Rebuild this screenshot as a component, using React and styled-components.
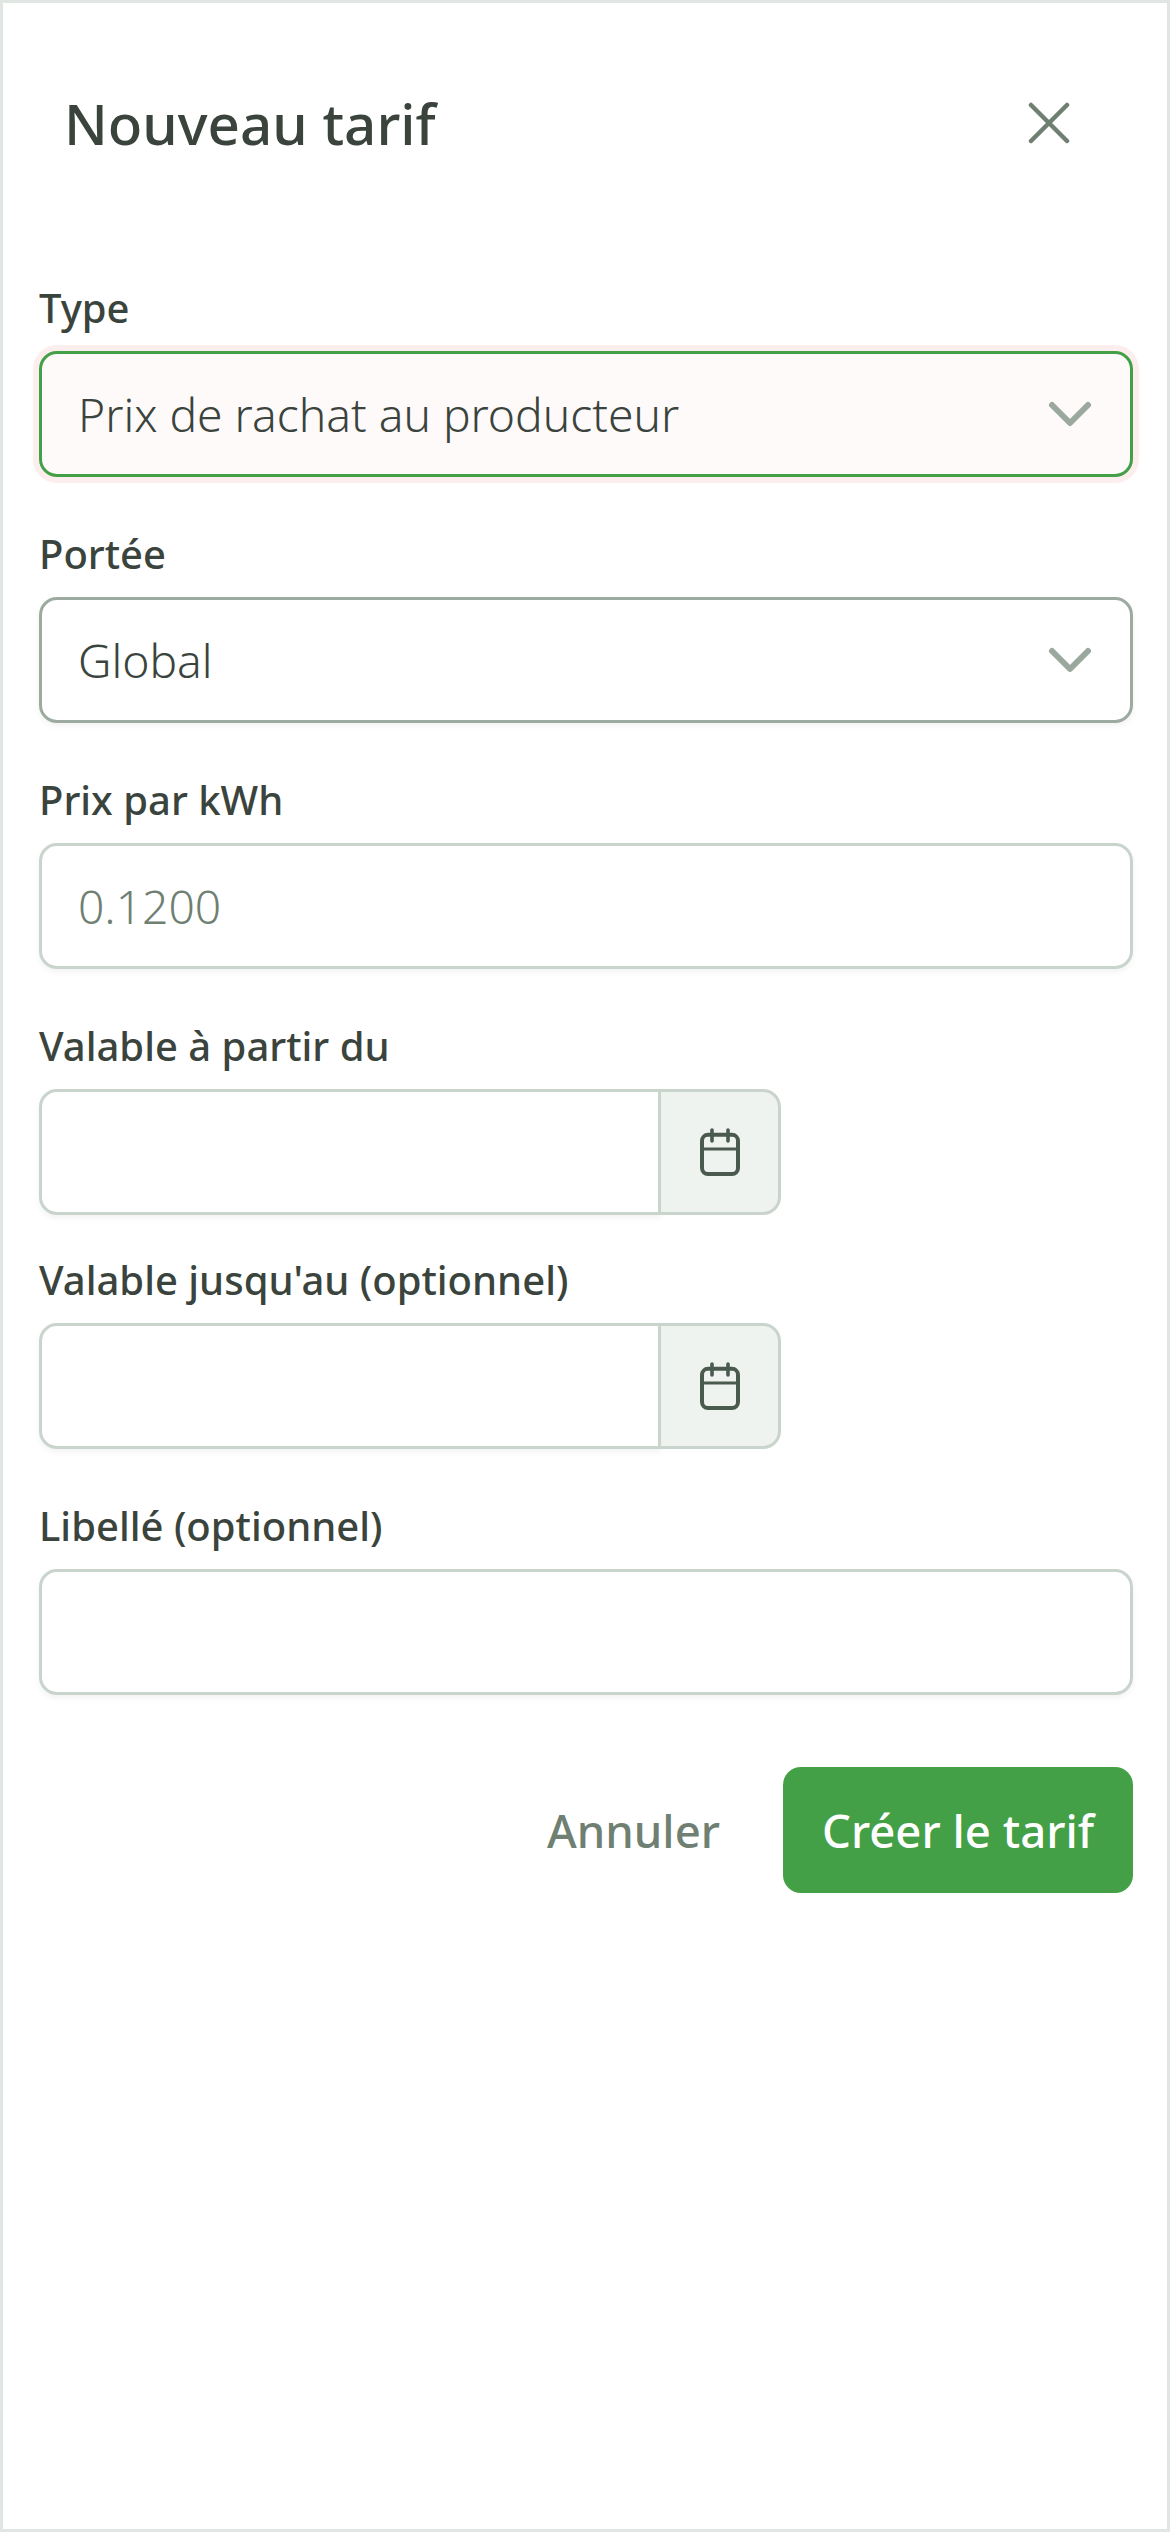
import React from 'react'
import styled, { createGlobalStyle } from 'styled-components'

const GlobalStyle = createGlobalStyle`
  html, body {
    margin: 0;
    padding: 0;
    background: #fff;
  }
  * { box-sizing: border-box; }
`

const Panel = styled.div`
  width: 1170px;
  height: 2532px;
  border: 3px solid #e0e7e3;
  background: #fff;
  padding: 0 34px 0 36px;
  font-family: "Noto Sans", "Open Sans", sans-serif;
  color: #3a443d;
`

const Header = styled.div`
  display: flex;
  align-items: center;
  justify-content: space-between;
  height: 246px;
  margin-bottom: 27px;
  padding: 0 63px 3px 25px;
`

const Title = styled.h1`
  margin: 0;
  font-size: 56.5px;
  font-weight: 500;
  line-height: 1;
`

const CloseButton = styled.button`
  display: flex;
  margin-bottom: 3px;
  padding: 0;
  border: 0;
  background: none;
  color: #6f7f72;
`

const Field = styled.div`
  margin-bottom: ${props => props.$gap}px;
`

const Label = styled.label`
  display: block;
  height: 75px;
  padding-top: 5px;
  font-size: 40px;
  line-height: 54px;
  font-weight: 500;
  color: #3a443d;
`

const SelectWrap = styled.div`
  position: relative;
  height: 126px;
`

const Select = styled.select`
  appearance: none;
  display: block;
  width: 100%;
  height: 100%;
  padding: 0 100px 0 36px;
  border: 3px solid ${props => (props.$active ? '#43a047' : '#9caa9f')};
  border-radius: 18px;
  background: ${props => (props.$active ? '#fffafa' : '#fff')};
  box-shadow: ${props => (props.$active ? '0 0 0 6px #fdeeee' : '0 3px 6px rgba(0,0,0,.05)')};
  font-family: inherit;
  font-size: 46.2px;
  font-weight: 300;
  color: #3a443d;
`

const Chevron = styled.svg`
  position: absolute;
  top: 39px;
  right: 39px;
  color: #9aa89e;
`

const TextInput = styled.input`
  display: block;
  width: 100%;
  height: 126px;
  padding: 0 36px;
  border: 3px solid #c9d4cd;
  border-radius: 18px;
  background: #fff;
  box-shadow: 0 3px 6px rgba(0,0,0,.05);
  font-family: inherit;
  font-size: 46.2px;
  font-weight: 300;
  color: #3a443d;
  &::placeholder {
    color: #6f7f72;
    opacity: 1;
  }
`

const DateGroup = styled.div`
  display: flex;
  width: 742px;
  height: 126px;
`

const DateInput = styled.input`
  flex: 1;
  min-width: 0;
  height: 100%;
  border: 3px solid #c9d4cd;
  border-radius: 18px 0 0 18px;
  background: #fff;
  box-shadow: 0 3px 6px rgba(0,0,0,.05);
`

const DateAddon = styled.span`
  display: flex;
  align-items: center;
  justify-content: center;
  width: 123px;
  margin-left: -3px;
  border: 3px solid #c9d4cd;
  border-radius: 0 18px 18px 0;
  background: #eff3f0;
  color: #4a5a4e;
`

const Actions = styled.div`
  display: flex;
  justify-content: flex-end;
  align-items: center;
  gap: 24px;
  margin-top: 72px;
`

const CancelButton = styled.button`
  height: 126px;
  padding: 0 39px;
  border: 0;
  background: none;
  font-family: inherit;
  font-size: 45.5px;
  font-weight: 500;
  color: #6f7f72;
`

const SubmitButton = styled.button`
  height: 126px;
  padding: 0 39px;
  border: 0;
  border-radius: 18px;
  background: #43a047;
  font-family: inherit;
  font-size: 45.5px;
  font-weight: 500;
  color: #fff;
`

const ChevronIcon = () => (
  <Chevron width="48" height="48" viewBox="0 0 16 16" fill="none" stroke="currentColor" strokeWidth="2" strokeLinecap="round" strokeLinejoin="round">
    <path d="m2 5 6 6 6-6" />
  </Chevron>
)

const CalendarIcon = () => (
  <svg width="48" height="48" viewBox="0 0 24 24" fill="none" stroke="currentColor" strokeWidth="2" strokeLinecap="round" strokeLinejoin="round">
    <rect x="3" y="3.4" width="18" height="19.6" rx="3" />
    <path d="M8 1v5.5M16 1v5.5" strokeWidth="1.8" />
    <path d="M3 10.5h18" strokeWidth="1.5" />
  </svg>
)

export default function App() {
  return (
    <Panel>
      <GlobalStyle />
      <Header>
        <Title>Nouveau tarif</Title>
        <CloseButton>
          <svg width="42" height="42" viewBox="0 0 42 42" fill="none" stroke="currentColor" strokeWidth="4.5" strokeLinecap="round">
            <path d="M3 3l36 36M39 3L3 39" />
          </svg>
        </CloseButton>
      </Header>

      <Field $gap={45}>
        <Label>Type</Label>
        <SelectWrap>
          <Select $active defaultValue="rachat">
            <option value="rachat">Prix de rachat au producteur</option>
          </Select>
          <ChevronIcon />
        </SelectWrap>
      </Field>

      <Field $gap={45}>
        <Label>Portée</Label>
        <SelectWrap>
          <Select defaultValue="global">
            <option value="global">Global</option>
          </Select>
          <ChevronIcon />
        </SelectWrap>
      </Field>

      <Field $gap={45}>
        <Label>Prix par kWh</Label>
        <TextInput placeholder="0.1200" />
      </Field>

      <Field $gap={33}>
        <Label>Valable à partir du</Label>
        <DateGroup>
          <DateInput type="text" />
          <DateAddon><CalendarIcon /></DateAddon>
        </DateGroup>
      </Field>

      <Field $gap={45}>
        <Label>Valable jusqu'au (optionnel)</Label>
        <DateGroup>
          <DateInput type="text" />
          <DateAddon><CalendarIcon /></DateAddon>
        </DateGroup>
      </Field>

      <Field $gap={0}>
        <Label>Libellé (optionnel)</Label>
        <TextInput />
      </Field>

      <Actions>
        <CancelButton>Annuler</CancelButton>
        <SubmitButton>Créer le tarif</SubmitButton>
      </Actions>
    </Panel>
  )
}
